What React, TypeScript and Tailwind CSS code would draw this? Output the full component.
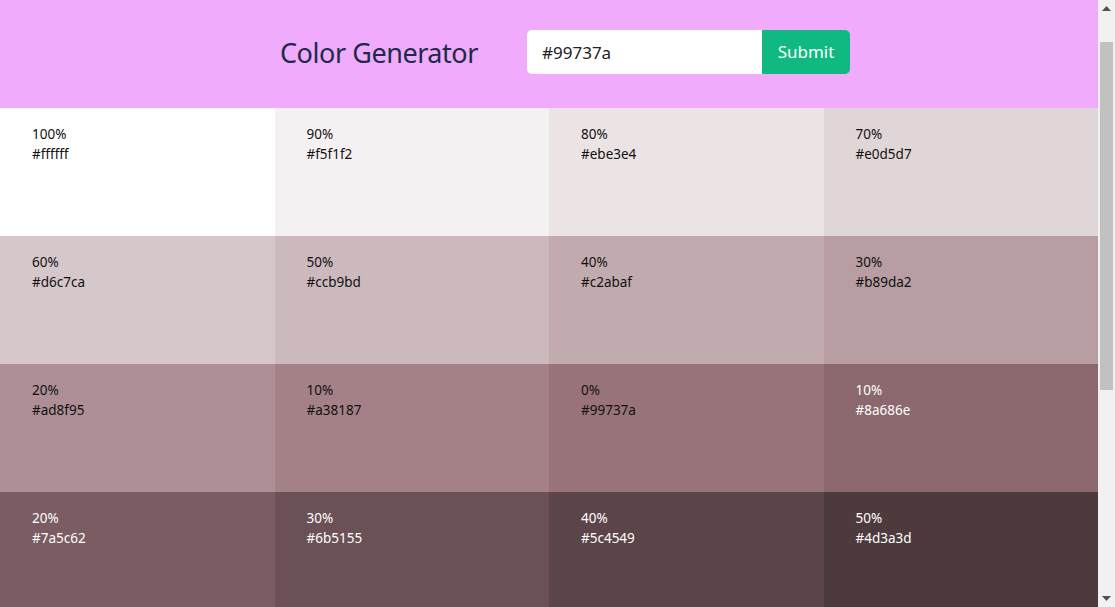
import React from "react";

const tiles = [
  { p: "100%", hex: "#ffffff" },
  { p: "90%", hex: "#f5f1f2" },
  { p: "80%", hex: "#ebe3e4" },
  { p: "70%", hex: "#e0d5d7" },
  { p: "60%", hex: "#d6c7ca" },
  { p: "50%", hex: "#ccb9bd" },
  { p: "40%", hex: "#c2abaf" },
  { p: "30%", hex: "#b89da2" },
  { p: "20%", hex: "#ad8f95" },
  { p: "10%", hex: "#a38187" },
  { p: "0%", hex: "#99737a" },
  { p: "10%", hex: "#8a686e" },
  { p: "20%", hex: "#7a5c62" },
  { p: "30%", hex: "#6b5155" },
  { p: "40%", hex: "#5c4549" },
  { p: "50%", hex: "#4d3a3d" },
];

export default function App() {
  return (
    <div
      className="flex h-[607px] w-[1115px] overflow-hidden"
      style={{ fontFamily: '"Noto Sans", "Open Sans", sans-serif' }}
    >
      <main className="flex w-[1098px] flex-col">
        <header className="flex h-[108px] shrink-0 items-center bg-[#f0abfc] pb-[4px] pl-[280px]">
          <h3 className="w-[198px] text-[27px] leading-none tracking-[-0.45px] text-[#1e2a4a]">Color Generator</h3>
          <form className="ml-[49px] flex h-[44px]" onSubmit={(e) => e.preventDefault()}>
            <input
              className="h-full w-[235px] rounded-l-[5px] bg-white px-[15px] text-[17px] text-[#222] outline-none"
              defaultValue="#99737a"
            />
            <button
              type="submit"
              className="h-full w-[88px] rounded-r-[5px] bg-[#10b981] text-[17px] text-white"
            >
              Submit
            </button>
          </form>
        </header>
        <section className="grid grid-cols-4">
          {tiles.map((t, i) => (
            <article
              key={i}
              className={
                "h-32 px-8 pt-4 text-[13.5px] leading-[20px] " +
                (i >= 11 ? "text-white" : "text-[#111]")
              }
              style={{ backgroundColor: t.hex }}
            >
              <p>{t.p}</p>
              <p>{t.hex}</p>
            </article>
          ))}
        </section>
      </main>
      <div className="flex w-[17px] shrink-0 flex-col items-center bg-[#f1f1f1]">
        <div className="flex h-[17px] w-full items-center justify-center">
          <svg width="9" height="5" viewBox="0 0 9 5">
            <path d="M4.5 0 L9 5 L0 5 Z" fill="#505050" />
          </svg>
        </div>
        <div className="mt-[25px] h-[348px] w-[13px] bg-[#c1c1c1]" />
        <div className="flex-1" />
        <div className="flex h-[17px] w-full items-center justify-center">
          <svg width="9" height="5" viewBox="0 0 9 5">
            <path d="M0 0 L9 0 L4.5 5 Z" fill="#505050" />
          </svg>
        </div>
      </div>
    </div>
  );
}
